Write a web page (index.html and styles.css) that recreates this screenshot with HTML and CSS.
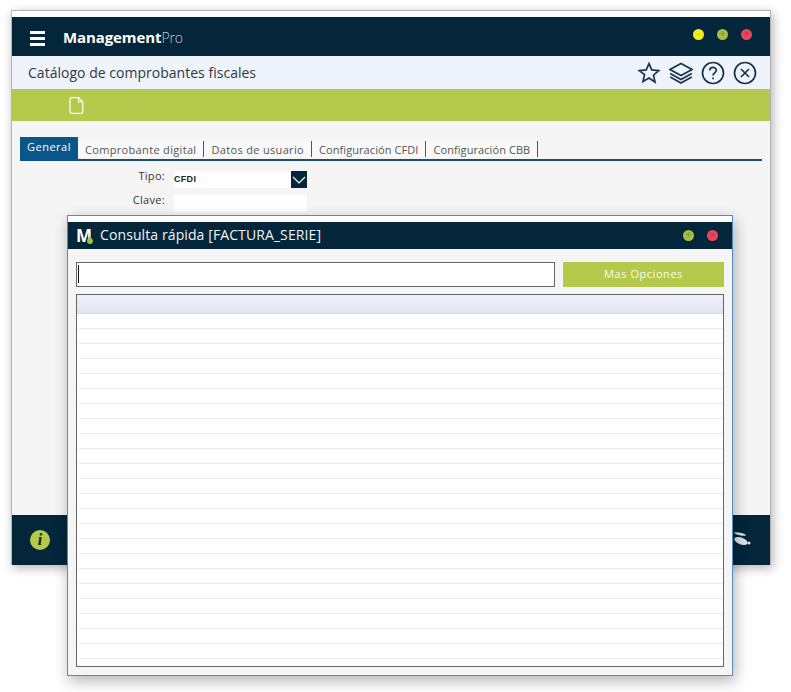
FILE: index.html
```html
<!DOCTYPE html>
<html lang="es">
<head>
<meta charset="utf-8">
<title>Catálogo de comprobantes fiscales</title>
<link rel="stylesheet" href="styles.css">
</head>
<body>
<div class="desktop">
  <section class="window main-window">
    <header class="app-bar">
      <div class="burger"><i></i><i></i><i></i></div>
      <div class="brand"><b>Management</b><span>Pro</span></div>
      <div class="dots">
        <span class="dot yellow minus"></span>
        <span class="dot green plus"></span>
        <span class="dot red cross"></span>
      </div>
    </header>
    <div class="title-bar">
      <h1>Catálogo de comprobantes fiscales</h1>
      <div class="tools">
        <svg width="24" height="24" viewBox="0 0 24 24"><path d="M12 2.600l2.800 6.300 6.900.7-5.200 4.600 1.500 6.800L12 17l-6 3.500 1.500-6.800L2.300 9.600l6.900-.7z"/></svg>
        <svg width="24" height="24" viewBox="0 0 24 24"><path d="M12 2.500L23 8.500 12 14.500 1 8.500z"/><path d="M1.200 12.500L12 18.500l10.800-6"/><path d="M1.200 16L12 22l10.800-6"/></svg>
        <svg width="24" height="24" viewBox="0 0 24 24"><circle cx="12" cy="12" r="10.500"/><path d="M8.800 9.500c0-4.200 6.500-4.200 6.500-.2 0 2.600-3.300 2.600-3.300 5.200"/><path d="M12 16.500v1.800"/></svg>
        <svg width="24" height="24" viewBox="0 0 24 24"><circle cx="12" cy="12" r="10.500"/><path d="M8 8l8 8M16 8l-8 8"/></svg>
      </div>
    </div>
    <div class="action-bar">
      <svg width="15" height="17" viewBox="0 0 15 17"><path d="M2.500.7H9.500l4.300 4.300v9.800a1.500 1.500 0 0 1-1.500 1.500H2.500A1.500 1.500 0 0 1 1 14.800V2.200A1.500 1.500 0 0 1 2.500.7zM9.500.7v4.300h4.300"/></svg>
    </div>
    <main class="content">
      <nav class="tabs">
        <span class="tab active">General</span>
        <span class="tab">Comprobante digital</span>
        <span class="tab">Datos de usuario</span>
        <span class="tab tab-tight">Configuración CFDI</span>
        <span class="tab tab-tight">Configuración CBB</span>
      </nav>
      <div class="form">
        <label>Tipo:</label>
        <div class="select"><span>CFDI</span><span class="select-btn"><svg width="14" height="8" viewBox="0 0 14 8"><path d="M1 1l6 6 6-6"/></svg></span></div>
        <label>Clave:</label>
        <div class="field"></div>
        <label class="legend-label">Leyenda:</label>
        <div class="field legend-field"></div>
      </div>
    </main>
    <footer class="status-bar">
      <span class="info">i</span>
      <svg width="20" height="16" viewBox="0 0 20 16"><ellipse cx="8" cy="2" rx="6" ry="1.300" transform="rotate(12 8 2)"/><ellipse cx="9" cy="9" rx="7" ry="3.400" transform="rotate(20 9 9)"/><circle cx="17" cy="11" r="1.500"/></svg>
    </footer>
  </section>

  <section class="window dialog">
    <header class="dialog-bar">
      <span class="logo">M<svg width="6" height="8" viewBox="0 0 6 8"><path d="M3 0c1.500 2.500 3 3.500 3 5a3 3 0 0 1-6 0c0-1.500 1.500-2.500 3-5z"/></svg></span>
      <h2>Consulta rápida [FACTURA_SERIE]</h2>
      <div class="dots small">
        <span class="dot green plus"></span>
        <span class="dot red cross"></span>
      </div>
    </header>
    <div class="dialog-body">
      <div class="search-row">
        <div class="search"><i class="caret"></i></div>
        <button class="more">Mas Opciones</button>
      </div>
      <div class="grid">
        <div class="grid-head"></div>
        <div class="row"></div><div class="row"></div><div class="row"></div><div class="row"></div>
        <div class="row"></div><div class="row"></div><div class="row"></div><div class="row"></div>
        <div class="row"></div><div class="row"></div><div class="row"></div><div class="row"></div>
        <div class="row"></div><div class="row"></div><div class="row"></div><div class="row"></div>
        <div class="row"></div><div class="row"></div><div class="row"></div><div class="row"></div>
        <div class="row"></div><div class="row"></div><div class="row"></div>
      </div>
    </div>
  </section>
</div>
</body>
</html>
```
FILE: styles.css
```css
* { box-sizing: border-box; }
html, body { margin: 0; padding: 0; background: #fff; }
body { font-family: "Open Sans", "Noto Sans", sans-serif; color: #222; }
.desktop { position: relative; width: 791px; height: 692px; overflow: hidden; }
.window { position: absolute; display: flex; flex-direction: column; }

.main-window {
  left: 11px; top: 10px; width: 760px; height: 555px;
  background: #fff;
  border: 1px solid #b4b4b4; border-bottom: 0;
  box-shadow: 2px 3px 10px rgba(0,0,0,.3);
  padding-top: 6px;
}
.app-bar {
  height: 39px; background: #03263b; color: #fff;
  display: flex; align-items: center; flex: none;
  padding: 0 18px 0 18px;
}
.burger { width: 15px; display: flex; flex-direction: column; gap: 3px; margin-top: 3px; }
.burger i { display: block; height: 3px; background: #fff; }
.brand { margin-left: 18px; font-size: 15px; margin-top: 0; letter-spacing: -.1px; }
.brand b { font-weight: 700; }
.brand span { font-weight: 300; color: #c4ccd2; font-size: 14px; }
.dots { margin-left: auto; display: flex; gap: 13px; margin-top: -5px; }
.dot { width: 11px; height: 11px; border-radius: 50%; display: block; position: relative; }
.yellow { background: #f2ee14; }
.green { background: #a4bf41; }
.red { background: #e8485f; }
.dot::after { position: absolute; left: 0; width: 11px; text-align: center; font: 700 9px/11px "Liberation Sans", sans-serif; }
.minus::after { content: "-"; color: #c9c420; }
.plus::after { content: "+"; color: #7f9a30; }
.cross::after { content: "×"; color: #c9384d; }

.title-bar {
  height: 33px; background: #eff3fb; flex: none;
  display: flex; align-items: center; padding: 0 13px 0 16px;
}
.title-bar h1 { margin: 0; font-size: 14px; font-weight: 400; color: #2e3a42; letter-spacing: .02px; }
.tools { margin-left: auto; display: flex; gap: 8px; }
.tools svg { fill: none; stroke: #17364b; stroke-width: 1.700; display: block; }

.action-bar {
  height: 32px; background: #b5c94c; flex: none;
  display: flex; align-items: center; padding: 0 0 0 57px;
}
.action-bar svg { fill: none; stroke: #fff; stroke-width: 1.200; }

.content { flex: 1; background: #f5f5f5; padding: 16px 8px 0 8px; min-height: 0; }
.tabs { display: flex; align-items: flex-end; height: 24px; border-bottom: 2px solid #1f4f6b; font-size: 11px; letter-spacing: .33px; color: #555; }
.tab { height: 16px; line-height: 17px; padding: 0 7px; margin-bottom: 2px; border-right: 1px solid #555; background: #f9f9f9; }
.tab-tight { letter-spacing: .08px; }
.tab.active { background: #0b5688; color: #fff; border: 0; height: 24px; width: 58px; margin-bottom: -2px; line-height: 20px; padding: 0 0 0 7px; letter-spacing: .5px; }

.form {
  display: grid; grid-template-columns: 145px 133px; column-gap: 9px;
  grid-auto-rows: 17px; row-gap: 7px; margin-top: 10px; font-size: 11px; letter-spacing: .3px;
  color: #333;
}
.form label { text-align: right; line-height: 9px; }
.select, .field { background: #fff; height: 17px; }
.select { display: flex; justify-content: space-between; font: 700 9px/17px "Liberation Sans", sans-serif; color: #222; }
.select-btn { width: 16px; height: 17px; background: #03263b; display: flex; align-items: center; justify-content: center; }
.select-btn svg { fill: none; stroke: #fff; stroke-width: 1.200; }
.legend-label { margin-top: 95px; }
.legend-field { margin-top: 95px; }

.status-bar {
  height: 50px; background: #03263b; flex: none;
  display: flex; align-items: center; justify-content: space-between; padding: 0 18px 0 18px;
}
.info {
  width: 20px; height: 20px; border-radius: 50%; background: #b5c94c; color: #11210a;
  font: italic 700 16px/20px "Liberation Serif", serif; text-align: center;
}
.status-bar svg { fill: #dbe4ea; }

.dialog {
  left: 67px; top: 215px; width: 666px; height: 461px;
  background: #f5f5f5;
  border: 1px solid #4f8fc0;
  box-shadow: 2px 5px 14px rgba(0,0,0,.3);
}
.dialog-bar {
  height: 27px; margin-top: 6px; background: #03263b; color: #fff; flex: none;
  display: flex; align-items: center; padding: 0 14px 0 8px;
}
.dialog::before { content: ""; position: absolute; left: 0; right: 0; top: 0; height: 6px; background: #fff; }
.logo { font: 700 17px/17px "Open Sans", sans-serif; width: 24px; position: relative; }
.logo svg { position: absolute; left: 11px; top: 9px; fill: #a4bf41; }
.dialog-bar h2 { margin: 0 0 2px; font-size: 14px; font-weight: 400; color: #f2f5f7; letter-spacing: .1px; }
.dots.small { gap: 13px; margin-top: 0; }

.dialog-body { flex: 1; padding: 13px 8px 8px 8px; display: flex; flex-direction: column; gap: 7px; min-height: 0; }
.search-row { display: flex; gap: 8px; height: 25px; flex: none; }
.search { width: 479px; background: #fff; border: 1px solid #666; padding: 2px 0 0 1px; }
.caret { display: block; width: 1px; height: 18px; background: #111; }
.more {
  flex: 1; border: 0; background: #b5c94c; color: #fbfbe8; padding: 0 0 2px;
  font: 400 11px "Open Sans", sans-serif; letter-spacing: .55px;
}
.grid { flex: 1; background: #fff; border: 1px solid #666; overflow: hidden; min-height: 0; }
.grid-head { height: 19px; background: linear-gradient(#eef1fa, #e2e6f4); border-bottom: 1px solid #d9dbe2; }
.row { height: 15px; border-bottom: 1px solid #ebebeb; margin-left: 2px; }
```
